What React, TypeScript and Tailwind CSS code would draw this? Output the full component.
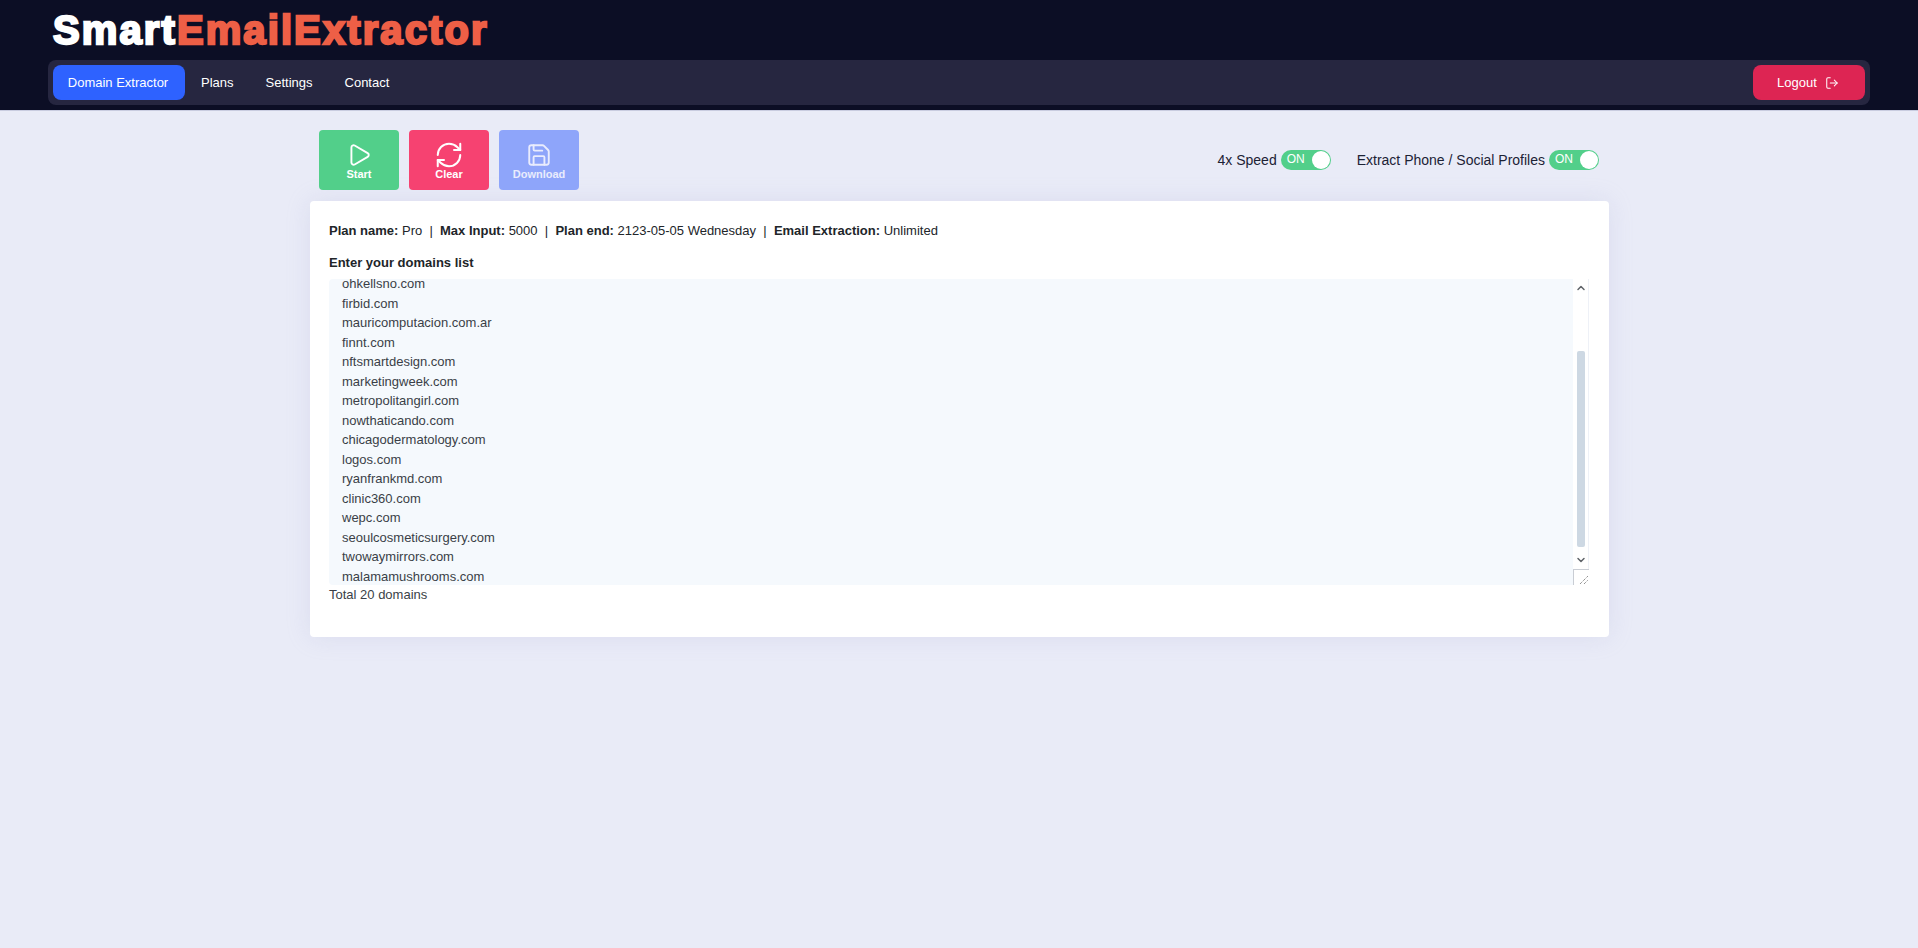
import { ChevronDown, ChevronUp, LogOut, Play, RefreshCw, Save } from 'lucide-react'

const domains = [
  'ohkellsno.com',
  'firbid.com',
  'mauricomputacion.com.ar',
  'finnt.com',
  'nftsmartdesign.com',
  'marketingweek.com',
  'metropolitangirl.com',
  'nowthaticando.com',
  'chicagodermatology.com',
  'logos.com',
  'ryanfrankmd.com',
  'clinic360.com',
  'wepc.com',
  'seoulcosmeticsurgery.com',
  'twowaymirrors.com',
  'malamamushrooms.com',
]

function Toggle() {
  return (
    <span className="flex h-5 w-[50px] items-center justify-between rounded-full bg-[#52cf8a] pl-[6px] pr-[1px] text-xs leading-none text-white">
      <span className="pb-[2px]">ON</span>
      <span className="h-[18px] w-[18px] rounded-full bg-white" />
    </span>
  )
}

export default function App() {
  return (
    <div className="min-h-[948px] bg-[#e9ebf7] font-['Liberation_Sans',Arial,sans-serif] text-[#212529]">
      <header className="h-[111px] border-b border-[#c9cce0] bg-[#0c0e25] px-12">
        <div className="h-[60px] pl-[5px] pt-[7px] text-[40px] leading-[46px] font-bold tracking-[2.1px] [-webkit-text-stroke:2.3px_currentColor]">
          <span className="text-white">Smart</span>
          <span className="text-[#ee5f46]">EmailExtractor</span>
        </div>
        <nav className="flex h-[45px] w-[1822px] items-center justify-between rounded-lg bg-[#262640] px-[5px]">
          <div className="flex items-center text-[13px] text-white">
            <a className="flex h-[35px] w-[132px] items-center justify-center rounded-lg bg-[#2e62ff] pr-[2px]">Domain Extractor</a>
            <a className="ml-4">Plans</a>
            <a className="ml-8">Settings</a>
            <a className="ml-8">Contact</a>
          </div>
          <button className="flex h-[35px] w-[112px] items-center justify-center gap-2 rounded-lg bg-[#dd2553] pr-[2px] text-[13px] text-white">
            Logout
            <LogOut size={14} strokeWidth={1.75} />
          </button>
        </nav>
      </header>

      <main className="ml-[310px] w-[1299px] pt-[19px]">
        <div className="flex items-center justify-between pl-[9px] pr-[10px]">
          <div className="flex gap-[10px] text-[11px] leading-[13px] font-bold text-white">
            <button className="flex h-[60px] w-[80px] flex-col items-center rounded-[4px] bg-[#52cf8a] pt-3">
              <Play size={26} strokeWidth={1.75} />
              Start
            </button>
            <button className="flex h-[60px] w-[80px] flex-col items-center rounded-[4px] bg-[#f64271] pt-3">
              <RefreshCw size={30} strokeWidth={1.6} className="-my-[2px]" />
              Clear
            </button>
            <button className="flex h-[60px] w-[80px] flex-col items-center rounded-[4px] bg-[#8ea5fa] pt-3 text-[#e9ecfd]">
              <Save size={26} strokeWidth={1.75} />
              Download
            </button>
          </div>
          <div className="flex items-center text-sm text-[#1c2235]">
            <span>4x Speed</span>
            <span className="ml-1">
              <Toggle />
            </span>
            <span className="ml-[26px]">Extract Phone / Social Profiles</span>
            <span className="ml-1">
              <Toggle />
            </span>
          </div>
        </div>

        <section className="mt-[11px] h-[436px] rounded-[4px] bg-white px-[19px] pt-[22px] shadow-[0_0_24px_rgba(160,165,210,0.2)]">
          <p className="text-[13px] leading-[16px] text-[#212529]">
            <b>Plan name:</b> Pro &nbsp;|&nbsp; <b>Max Input:</b> 5000 &nbsp;|&nbsp; <b>Plan end:</b> 2123-05-05 Wednesday &nbsp;|&nbsp; <b>Email Extraction:</b> Unlimited
          </p>
          <h2 className="mt-4 text-[13px] leading-[16px] font-bold">Enter your domains list</h2>
          <div className="mt-[8px] flex h-[306px] w-[1260px]">
            <div className="flex-1 overflow-hidden rounded-l-[4px] bg-[#f5f9fd] pl-[13px] text-[13px] leading-[19.5px] text-[#3a3f47]">
              <div className="-mt-[5px]">
                {domains.map((d) => (
                  <div key={d}>{d}</div>
                ))}
              </div>
            </div>
            <div className="flex w-[16px] flex-col items-center border-r border-[#eef1f7] bg-white">
              <ChevronUp size={12} strokeWidth={3} className="mt-[3px] text-[#5f6368]" />
              <div className="mt-[57px] h-[196px] w-2 rounded-[2px] bg-[#cdd8e3]" />
              <ChevronDown size={12} strokeWidth={3} className="mt-[7px] text-[#5f6368]" />
              <div className="mt-[3px] flex h-[16px] w-[16px] items-end justify-end border-t border-l border-[#c9cdd4] bg-white">
                <svg width="10" height="10" viewBox="0 0 10 10" className="text-[#666]">
                  <path d="M1 9 L9 1 M5 9 L9 5" stroke="currentColor" strokeWidth="1" strokeDasharray="1 1" />
                </svg>
              </div>
            </div>
          </div>
          <p className="text-[13px] leading-[20px] text-[#3a3f47]">Total 20 domains</p>
        </section>
      </main>
    </div>
  )
}
